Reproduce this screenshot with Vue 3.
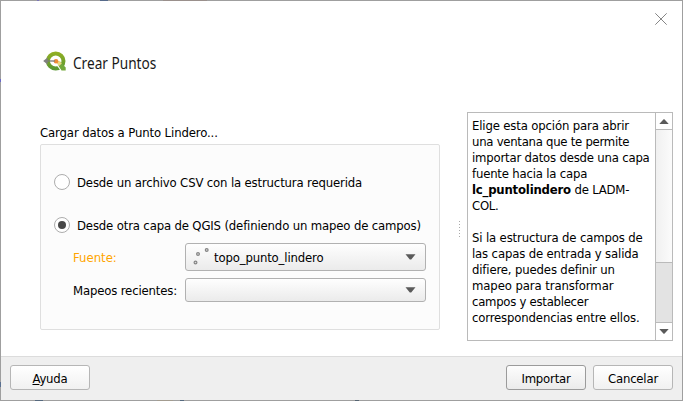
<script setup>
import { ref } from 'vue'

const source = ref('layer')
const options = [
  { id: 'csv', label: 'Desde un archivo CSV con la estructura requerida' },
  { id: 'layer', label: 'Desde otra capa de QGIS (definiendo un mapeo de campos)' },
]
</script>

<template>
  <div class="window">
    <header class="titlebar">
      <button class="close" aria-label="Cerrar">
        <svg width="12" height="12" viewBox="0 0 12 12"><path d="M.3.3 11.7 11.7M11.7.3.3 11.7" stroke="#858585" fill="none" /></svg>
      </button>
    </header>

    <div class="heading">
      <svg class="logo" width="24" height="21" viewBox="0 0 24 21">
        <defs>
          <linearGradient id="ring" gradientUnits="userSpaceOnUse" x1="0" y1="1" x2="0" y2="19">
            <stop offset="0" stop-color="#93b023" />
            <stop offset="1" stop-color="#589632" />
          </linearGradient>
        </defs>
        <ellipse cx="12.7" cy="10" rx="7.8" ry="7.4" fill="none" stroke="url(#ring)" stroke-width="4" />
        <path d="M13 12.4 18.4 19.6" stroke="#fff" stroke-width="1.2" />
        <path d="M14.2 11.8 17 10.4 22.7 16.4v3.1h-4.2z" fill="#74a93c" />
        <path d="M13.2 11.6 15.8 9.4 18.8 12.6 16 15z" fill="#ecd783" />
        <circle cx="13" cy="10.3" r="2.3" fill="#f08a35" />
        <path d="M3 10h9" stroke="#7b7b7b" stroke-width="1.3" />
        <path d="M.2 10 4.6 6.6v6.8z" fill="#808080" />
      </svg>
      <h1>Crear Puntos</h1>
    </div>

    <main class="content">
      <section class="left">
        <div class="caption">Cargar datos a Punto Lindero...</div>
        <div class="group">
          <label v-for="o in options" :key="o.id" class="option">
            <span class="radio" :class="{ checked: source === o.id }" @click="source = o.id"></span>
            <span class="text">{{ o.label }}</span>
          </label>
          <div class="form">
            <span class="text orange">Fuente:</span>
            <div class="combo tall">
              <svg class="points" width="18" height="20" viewBox="0 0 18 20">
                <g fill="#ddd" stroke="#858585" stroke-width="1.2">
                  <circle cx="3.5" cy="15.5" r="1.4" />
                  <circle cx="6" cy="7" r="1.4" />
                  <circle cx="14.7" cy="3" r="1.4" />
                </g>
              </svg>
              <span class="text">topo_punto_lindero</span>
              <svg class="caret" width="11" height="6" viewBox="0 0 11 6"><path d="M.5.2h10L6.2 5.5H4.8z" fill="#5a5a5a" /></svg>
            </div>
            <span class="text">Mapeos recientes:</span>
            <div class="combo">
              <svg class="caret" width="11" height="6" viewBox="0 0 11 6"><path d="M.5.2h10L6.2 5.5H4.8z" fill="#5a5a5a" /></svg>
            </div>
          </div>
        </div>
      </section>

      <div class="splitter"><i v-for="n in 6" :key="n"></i></div>

      <section class="help">
        <div class="help-text">
          <p>
            <span>Elige esta opción para abrir</span>
            <span class="tight">una ventana que te permite</span>
            <span class="snug">importar datos desde una capa</span>
            <span class="snug">fuente hacia la capa</span>
            <span class="snug"><b>lc_puntolindero</b> de LADM-</span>
            <span class="tight">COL.</span>
          </p>
          <p>
            <span>Si la estructura de campos de</span>
            <span>las capas de entrada y salida</span>
            <span>difiere, puedes definir un</span>
            <span class="loose">mapeo para transformar</span>
            <span class="tight">campos y establecer</span>
            <span>correspondencias entre ellos.</span>
          </p>
        </div>
        <div class="scrollbar">
          <div class="arrow up"><svg width="10" height="5" viewBox="0 0 10 5"><path d="M.3 5h9.4L5.4.3h-.8z" fill="#5a5a5a" /></svg></div>
          <div class="track"></div>
          <div class="thumb"></div>
          <div class="arrow"><svg width="10" height="5" viewBox="0 0 10 5"><path d="M.3 0h9.4L5.4 4.7h-.8z" fill="#5a5a5a" /></svg></div>
        </div>
      </section>
    </main>

    <footer class="footer">
      <button class="btn help-btn"><u>A</u>yuda</button>
      <button class="btn primary">Importar</button>
      <button class="btn">Cancelar</button>
    </footer>
  </div>
</template>

<style>
body { margin: 0; overflow: hidden; }
</style>

<style scoped>
.window {
  box-sizing: border-box;
  width: 683px;
  height: 401px;
  border: 1px solid transparent;
  background:
    linear-gradient(#fff, #fff) padding-box,
    linear-gradient(90deg, transparent 37px, #7a74b8 37px 39px, transparent 39px 100px, #566a8a 100px 108px, transparent 108px 163px, #9a908c 163px 207px, transparent 207px) 0 0 / 100% 1px no-repeat border-box,
    linear-gradient(90deg, transparent 35px, #56697e 35px 43px, transparent 43px 157px, #a39c90 157px 173px, transparent 173px 180px, #56697e 180px 184px, transparent 184px 355px, #566472 355px 359px, transparent 359px) 0 100% / 100% 1px no-repeat border-box,
    linear-gradient(transparent 79px, #6a68c8 79px 82px, transparent 82px 382px, #5a7090 382px 387px, transparent 387px) 0 0 / 1px 100% no-repeat border-box,
    linear-gradient(#9f9f9f, #9f9f9f) border-box;
  display: flex;
  flex-direction: column;
  font: 13px/16px "DejaVu Sans Condensed", "DejaVu Sans", sans-serif;
  font-stretch: condensed;
  letter-spacing: -.155px;
  color: #000;
  white-space: nowrap;
}
.titlebar { height: 48px; flex: none; display: flex; justify-content: flex-end; }
.close { border: 0; padding: 0; background: none; width: 12px; height: 12px; margin: 12px 15px 0 0; }
svg { display: block; flex: none; }
.heading { height: 26px; flex: none; display: flex; align-items: center; padding-left: 42px; }
.logo { margin-top: -1px; }
h1 {
  margin: 1px 0 0 6px;
  font: 400 15.5px/20px "Noto Sans", sans-serif;
  letter-spacing: 0;
  color: #191919;
  transform: scaleX(.88);
  transform-origin: 0 50%;
}
.content { height: 281px; flex: none; display: flex; align-items: flex-start; padding-left: 39px; }
.left { width: 400px; padding-top: 49px; }
.caption { box-sizing: border-box; height: 20px; padding-top: 1px; letter-spacing: -.12px; }
.text { padding-top: 1px; }
.group {
  box-sizing: border-box;
  height: 186px;
  border: 1px solid #dfdfdf;
  border-radius: 2px;
  background: #fcfcfc;
  padding: 29px 13px 0;
}
.option { display: flex; align-items: center; height: 16px; margin-bottom: 27px; gap: 7px; }
.radio {
  box-sizing: border-box;
  width: 16px;
  height: 16px;
  border: 1px solid #adadad;
  border-radius: 50%;
  background: #fff;
  display: grid;
  place-items: center;
}
.radio.checked::after { content: ""; width: 8px; height: 8px; border-radius: 50%; background: #484848; }
.form { display: grid; grid-template-columns: 112px 241px; row-gap: 7px; align-items: center; padding-left: 19px; margin-top: -17px; }
.orange { color: #ffa500; letter-spacing: 0; }
.combo {
  box-sizing: border-box;
  height: 24px;
  border: 1px solid #b1b1b1;
  border-radius: 3px;
  background: linear-gradient(#fefefe, #ebebeb);
  display: flex;
  align-items: center;
  padding: 0 9px 0 6px;
}
.combo.tall { height: 28px; }
.points { margin-right: 4px; }
.caret { margin-left: auto; }
.splitter { width: 27px; padding: 146px 0 0 19px; box-sizing: border-box; display: flex; flex-direction: column; gap: 2px; }
.splitter i { width: 1px; height: 1px; background: #aaa; }
.help { box-sizing: border-box; width: 206px; height: 229px; margin-top: 37px; border: 1px solid #bababa; display: flex; }
.help-text { flex: 1; padding: 5px 0 0 4px; min-width: 0; }
.help-text p { margin: 0 0 16px; }
.help-text p > span { display: block; }
.snug { letter-spacing: -.2px; }
.tight { letter-spacing: -.27px; }
.loose { letter-spacing: -.1px; }
.scrollbar { width: 16px; border-left: 1px solid #bababa; display: flex; flex-direction: column; }
.arrow { height: 17px; display: grid; place-items: center; background: #fff; }
.arrow.up { height: 16px; border-bottom: 1px solid #bababa; }
.track { flex: 1; background: linear-gradient(90deg, #f0f0f0, #fbfbfb); }
.thumb { height: 59px; border: solid #bababa; border-width: 1px 0; background: #e3e3e3; }
.footer {
  box-sizing: border-box;
  flex: 1;
  border-top: 1px solid #dcdcdc;
  background: #efefef;
  display: flex;
  gap: 7px;
  padding: 8px 9px 0;
}
.btn {
  box-sizing: border-box;
  width: 80px;
  height: 25px;
  border: 1px solid #b6b6b6;
  border-radius: 3px;
  background: linear-gradient(#fff, #f1f1f1);
  font: inherit;
  letter-spacing: -.2px;
  color: #000;
  padding: 3px 0 0;
}
.btn.primary { border-color: #9b9b9b; background: linear-gradient(#fdfdfd, #ebebeb); }
.help-btn { margin-right: auto; }
u { text-underline-offset: 1px; }
</style>
